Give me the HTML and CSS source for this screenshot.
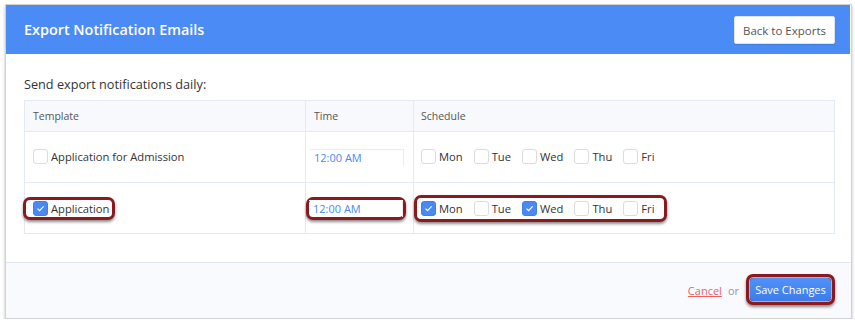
FILE: index.html
```html
<!DOCTYPE html>
<html lang="en">
<head>
  <meta charset="UTF-8">
  <title>Export Notification Emails</title>
  <link rel="stylesheet" href="styles.css">
</head>
<body>
  <div class="frame">
    <header class="top">
      <h1>Export Notification Emails</h1>
      <button class="back">Back to Exports</button>
    </header>

    <section class="content">
      <p class="lead">Send export notifications daily:</p>
      <table class="grid">
        <thead>
          <tr>
            <th class="c-tpl">Template</th>
            <th class="c-time">Time</th>
            <th class="c-days">Schedule</th>
          </tr>
        </thead>
        <tbody>
          <tr>
            <td>
              <label class="opt"><span class="box"></span>Application for Admission</label>
            </td>
            <td class="time-cell"><input class="time" type="text" value="12:00 AM"></td>
            <td class="days-cell">
              <div class="days">
                <label class="opt"><span class="box"></span>Mon</label>
                <label class="opt"><span class="box"></span>Tue</label>
                <label class="opt"><span class="box"></span>Wed</label>
                <label class="opt"><span class="box"></span>Thu</label>
                <label class="opt"><span class="box"></span>Fri</label>
              </div>
            </td>
          </tr>
          <tr>
            <td>
              <span class="mark mark-tpl">
                <label class="opt"><span class="box on"><svg viewBox="0 0 14 14"><path d="M3.8 7.2l2.2 2.2 4.4-4.6"/></svg></span>Application</label>
              </span>
            </td>
            <td class="time-cell">
              <span class="mark mark-time"><input class="time" type="text" value="12:00 AM"></span>
            </td>
            <td class="days-cell">
              <span class="mark mark-days">
                <span class="days">
                  <label class="opt"><span class="box on"><svg viewBox="0 0 14 14"><path d="M3.8 7.2l2.2 2.2 4.4-4.6"/></svg></span>Mon</label>
                  <label class="opt"><span class="box"></span>Tue</label>
                  <label class="opt"><span class="box on"><svg viewBox="0 0 14 14"><path d="M3.8 7.2l2.2 2.2 4.4-4.6"/></svg></span>Wed</label>
                  <label class="opt"><span class="box"></span>Thu</label>
                  <label class="opt"><span class="box"></span>Fri</label>
                </span>
              </span>
            </td>
          </tr>
        </tbody>
      </table>
    </section>

    <footer class="foot">
      <a class="cancel" href="#">Cancel</a>
      <span class="or">or</span>
      <span class="mark mark-save"><button class="save">Save Changes</button></span>
    </footer>
  </div>
</body>
</html>
```

FILE: styles.css
```css
body {
  margin: 0;
  background: #fff;
  font-family: "Open Sans", Arial, sans-serif;
  color: #333;
}

.frame {
  margin: 4px 3px 0 5px;
  height: 313px;
  border: 1px solid #d2d2d2;
  box-shadow: 0 2px 3px rgba(0, 0, 0, 0.25);
  display: flex;
  flex-direction: column;
  background: #fff;
}

/* header bar */
.top {
  height: 49px;
  margin-right: 1px;
  background: #4b8bf6;
  display: flex;
  align-items: center;
  justify-content: space-between;
  padding: 0 15px 0 18px;
}

.top h1 {
  margin: 0;
  font-size: 14.4px;
  font-weight: 600;
  color: #fff;
}

.back {
  height: 28px;
  padding: 0 8px;
  background: #fff;
  border: 1px solid #dfe3ea;
  border-radius: 2px;
  font-family: inherit;
  font-size: 11.5px;
  color: #555;
  box-shadow: 0 1px 1px rgba(0, 0, 0, 0.1);
  margin-top: 1px;
}

/* body */
.content {
  padding: 21px 16px 28px 18px;
}

.lead {
  margin: 0 0 7px;
  font-size: 12.7px;
  line-height: 18px;
}

.grid {
  width: 100%;
  border-collapse: collapse;
  table-layout: fixed;
  font-size: 11.2px;
}

.grid th,
.grid td {
  border: 1px solid #e3eaf6;
  text-align: left;
  padding: 0 8px;
}

.grid th {
  height: 30px;
  background: #f7f9fd;
  font-weight: 400;
  font-size: 10.5px;
  color: #555;
}

.grid td {
  height: 50px;
}

.c-tpl { width: 264px; }
.c-time { width: 91px; }

.time-cell { padding-left: 4px !important; }
.grid .days-cell,
.grid .c-days { padding-left: 7px; }

.opt {
  display: inline-flex;
  align-items: center;
  gap: 3px;
  line-height: 17px;
  color: #333;
}

.box {
  width: 13px;
  height: 13px;
  border: 1px solid #dcdcdc;
  border-radius: 3px;
  background: #fff;
  display: inline-block;
  flex: none;
}

.box.on {
  background: #4a89f3;
  border-color: #3f7fe8;
}

.box svg {
  display: block;
  width: 13px;
  height: 13px;
  fill: none;
  stroke: #fff;
  stroke-width: 1.3;
}

.days {
  display: inline-flex;
  gap: 11px;
}

.time {
  width: 94px;
  height: 17px;
  box-sizing: border-box;
  border: none;
  border-top: 1px solid #ececec;
  border-right: 1px solid #ececec;
  padding: 0 4px;
  font-family: inherit;
  font-size: 11px;
  color: #4a89f3;
  background: transparent;
  outline: none;
}

/* annotation callouts */
.mark {
  display: inline-flex;
  align-items: center;
  border: 3px solid #8b1a1f;
  border-radius: 7px;
  box-shadow: 0 2px 3px rgba(0, 0, 0, 0.45), inset 0 0 0 1px rgba(255, 255, 255, 0.6);
  background: #fff;
  vertical-align: middle;
}

.mark-tpl {
  margin-left: -10px;
  padding: 0 3px 0 7px;
  height: 17px;
}

.mark-time {
  margin-left: -4px;
  height: 17px;
}

.mark-time .time {
  border-top-color: #fff;
}

.mark-days {
  margin-left: -7px;
  padding: 2px 9px 2px 4px;
}

/* footer */
.foot {
  flex: 1;
  border-top: 1px solid #e3e9f3;
  background: #f9fafe;
  display: flex;
  align-items: flex-start;
  justify-content: flex-end;
  padding: 11px 16px 0 0;
  font-size: 11px;
}

.cancel {
  color: #e8625e;
  margin-top: 9px;
}

.or {
  color: #999;
  margin: 9px 7px 0 6px;
}

.mark-save {
  padding: 1px;
  background: #8b1a1f;
}

.save {
  height: 23px;
  width: 81px;
  padding: 0;
  border: none;
  border-radius: 4px;
  background: linear-gradient(#5192f8, #3b7ce9);
  color: #fff;
  font-family: inherit;
  font-size: 11px;
}
```
